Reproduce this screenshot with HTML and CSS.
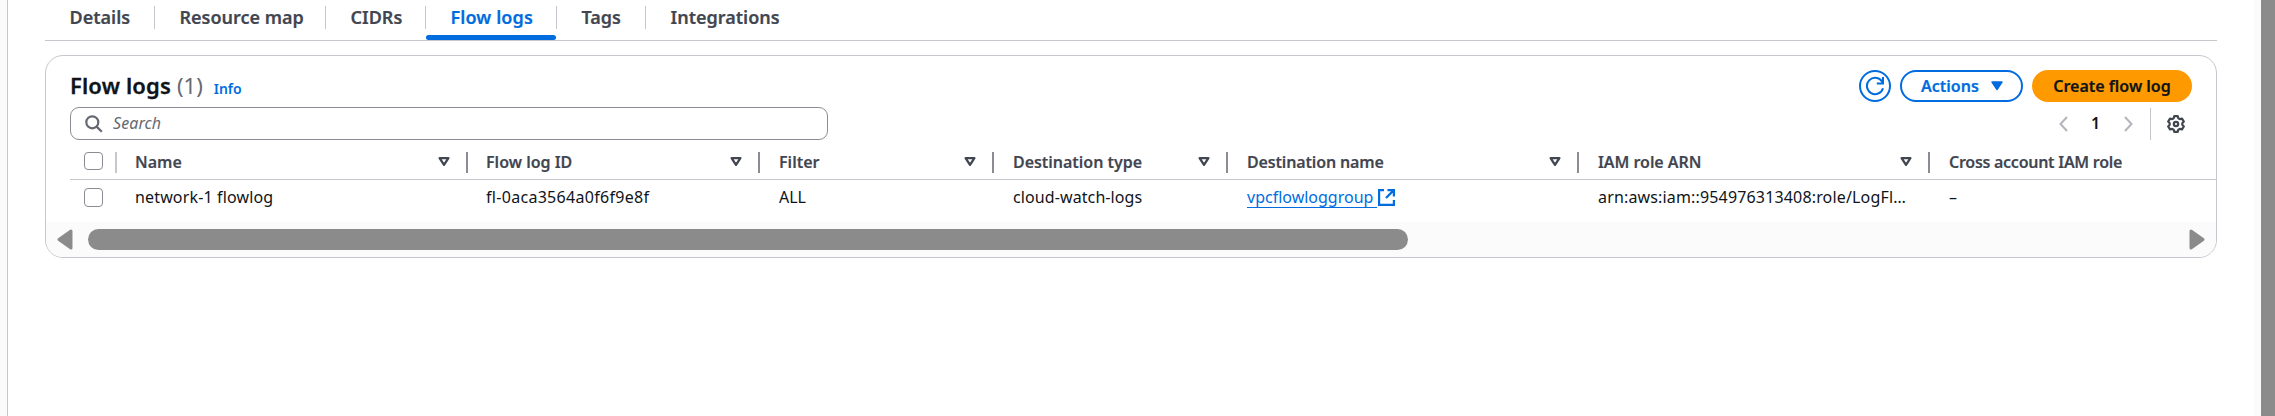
FILE: index.html
```html
<!DOCTYPE html>
<html lang="en">
<head>
<meta charset="utf-8">
<title>Flow logs</title>
<link rel="stylesheet" href="styles.css">
</head>
<body>
<div class="app">
  <div class="edge"></div>
  <main class="main">
    <nav class="tabs">
      <a class="tab t-details"><span>Details</span></a>
      <a class="tab t-map"><span>Resource map</span></a>
      <a class="tab t-cidrs"><span>CIDRs</span></a>
      <a class="tab t-flow active"><span>Flow logs</span></a>
      <a class="tab t-tags"><span>Tags</span></a>
      <a class="tab t-int"><span>Integrations</span></a>
    </nav>
    <section class="card">
      <header class="head">
        <h2 class="title">Flow logs</h2><span class="count">(1)</span><a class="info">Info</a>
        <div class="buttons">
          <button class="btn round" aria-label="Refresh"><svg width="20" height="20" viewBox="0 0 20 20" fill="none" stroke="currentColor" stroke-width="2"><path d="M18 12.200A8.200 8.200 0 1 1 17 5.500L18 7.200"/><path d="M18 1v6.500h-6.200"/></svg></button>
          <button class="btn actions"><span>Actions</span><svg width="12" height="10" viewBox="0 0 12 10"><path d="M1 1h10L6 8.6z" fill="currentColor" stroke="currentColor" stroke-width="1.4" stroke-linejoin="round"/></svg></button>
          <button class="btn primary"><span>Create flow log</span></button>
        </div>
      </header>
      <div class="tools">
        <div class="search"><svg width="18" height="18" viewBox="0 0 18 18" fill="none" stroke="currentColor" stroke-width="2.2"><circle cx="7.3" cy="7.3" r="6"/><path d="M11.6 11.6l5.2 5.2"/></svg><span>Search</span></div>
        <div class="pager">
          <svg class="prev" width="9" height="16" viewBox="0 0 9 16" fill="none" stroke="currentColor" stroke-width="2"><path d="M8 1L1.5 8 8 15"/></svg>
          <span class="page">1</span>
          <svg class="next" width="9" height="16" viewBox="0 0 9 16" fill="none" stroke="currentColor" stroke-width="2"><path d="M1 1l6.5 7L1 15"/></svg>
          <div class="gear"><svg width="18" height="18" viewBox="0 0 18 18" fill="none" stroke="currentColor" stroke-width="2.200" stroke-linejoin="round"><path d="M7.300 1.100h3.400l.6 2.100 1.500.9 2.200-.5 1.800 3-1.500 1.600v1.600l1.500 1.600-1.800 3-2.200-.5-1.500.9-.6 2.100H7.300l-.6-2.100-1.500-.9-2.200.5-1.800-3 1.500-1.600V8.200L1.200 6.600l1.800-3 2.200.5 1.500-.9z"/><circle cx="9" cy="9" r="2.200"/></svg></div>
        </div>
      </div>
      <div class="table">
        <div class="row thead">
          <div class="cell sel"><i class="box"></i></div>
          <div class="cell"><span class="h-name">Name</span><svg class="sort" viewBox="0 0 12 10"><path d="M1.600 1.200h8.800L6 7.900z"/></svg></div>
          <div class="cell"><span class="h-id">Flow log ID</span><svg class="sort" viewBox="0 0 12 10"><path d="M1.600 1.200h8.800L6 7.900z"/></svg></div>
          <div class="cell"><span class="h-filter">Filter</span><svg class="sort" viewBox="0 0 12 10"><path d="M1.600 1.200h8.800L6 7.900z"/></svg></div>
          <div class="cell"><span class="h-type">Destination type</span><svg class="sort" viewBox="0 0 12 10"><path d="M1.600 1.200h8.800L6 7.900z"/></svg></div>
          <div class="cell"><span class="h-dest">Destination name</span><svg class="sort" viewBox="0 0 12 10"><path d="M1.600 1.200h8.800L6 7.900z"/></svg></div>
          <div class="cell"><span class="h-arn">IAM role ARN</span><svg class="sort" viewBox="0 0 12 10"><path d="M1.600 1.200h8.800L6 7.900z"/></svg></div>
          <div class="cell last"><span class="h-cross">Cross account IAM role</span></div>
        </div>
        <div class="row tbody">
          <div class="cell sel"><i class="box"></i></div>
          <div class="cell"><span class="c-name">network-1 flowlog</span></div>
          <div class="cell"><span class="c-id">fl-0aca3564a0f6f9e8f</span></div>
          <div class="cell"><span class="c-filter">ALL</span></div>
          <div class="cell"><span class="c-type">cloud-watch-logs</span></div>
          <div class="cell"><a class="link"><span class="c-dest">vpcflowloggroup</span></a><svg class="ext" width="17" height="17" viewBox="0 0 17 17" fill="none" stroke="currentColor" stroke-width="2.200"><path d="M6 1.100H1.100v14.800h14.800V11"/><path d="M9.500 1.100h6.400v6.400M15.600 1.400L8 9"/></svg></div>
          <div class="cell"><span class="c-arn">arn:aws:iam::954976313408:role/LogFl…</span></div>
          <div class="cell last"><span>–</span></div>
        </div>
      </div>
      <div class="hscroll">
        <svg width="16" height="21" viewBox="0 0 16 21"><path d="M14 2v17L2 10.500z"/></svg>
        <div class="thumb"></div>
        <svg class="right" width="16" height="21" viewBox="0 0 16 21"><path d="M2 2v17l12-8.500z"/></svg>
      </div>
    </section>
  </main>
  <div class="gutter"></div>
  <div class="vscroll"></div>
</div>
</body>
</html>
```
FILE: styles.css
```css
* { box-sizing: border-box; }
body { margin: 0; background: #fff; color: #0f141a; font: 16px/20px "Noto Sans", "Open Sans", sans-serif; overflow: hidden; }
svg { display: block; flex: none; }
span, a, h2 { white-space: nowrap; }
.app { display: flex; height: 416px; }
.edge { width: 8px; background: #fbfbfb; border-right: 1px solid #c6c6cd; }
.main { flex: 1; padding: 0 37px; }
.gutter { width: 7px; background: #fbfbfb; }
.vscroll { width: 14px; background: #8b8b8b; }

.tabs { display: flex; height: 41px; border-bottom: 1px solid #c6c6cd; }
.tab { position: relative; height: 29px; padding: 5px 0 0 24.500px; font-size: 18px; line-height: 24px; font-weight: 600; color: #424650; -webkit-text-stroke: .2px currentColor; }
.tab::after { content: ""; position: absolute; right: 0; top: 6px; width: 1px; height: 23px; background: #c6c6cd; }
.tab:last-child::after { display: none; }
.t-details { width: 110px; }
.t-map { width: 171px; }
.t-cidrs { width: 100px; }
.t-flow { width: 131px; letter-spacing: .1px; }
.t-tags { width: 89px; }
.tab.active { color: #006ce0; }
.tab.active::before { content: ""; position: absolute; left: 0; top: 35px; width: 130px; height: 5px; border-radius: 3px; background: #006ce0; }

.card { margin-top: 14px; height: 203px; border: 1px solid #c6c6cd; border-radius: 18px; overflow: hidden; }
.head { display: flex; align-items: baseline; height: 51px; padding: 13px 24px 0; }
.title { margin: 0; font-size: 22px; line-height: 32px; font-weight: 600; letter-spacing: .15px; -webkit-text-stroke: .3px currentColor; }
.count { margin-left: 6px; font-size: 22px; color: #656871; }
.info { margin-left: 11px; font-size: 14px; font-weight: 600; color: #006ce0; }
.buttons { display: flex; gap: 9px; margin: 1px 0 0 auto; align-self: flex-start; }
.btn { display: flex; align-items: center; height: 32px; padding: 0; border: 2px solid #006ce0; border-radius: 16px; background: #fff; color: #006ce0; font: 600 16px/20px "Noto Sans", sans-serif; }
.btn span { -webkit-text-stroke: .2px currentColor; }
.round { width: 32px; justify-content: center; }
.actions { width: 123px; padding: 0 18px 0 19px; justify-content: space-between; }
.primary { width: 160px; justify-content: center; border-color: #ff9900; background: #ff9900; color: #0f141a; }

.tools { display: flex; justify-content: space-between; height: 34px; padding: 0 24px; }
.search { display: flex; align-items: center; width: 758px; height: 33px; padding-left: 14px; border: 1px solid #8c8c94; border-radius: 9px; color: #656871; }
.search span { margin: -1px 0 0 10px; font-style: italic; letter-spacing: .08px; }
.pager { display: flex; align-items: center; height: 33px; color: #b4b4bb; }
.page { width: 8px; margin: -1px 25px 0 23px; font-weight: 600; color: #0f141a; }
.gear { display: flex; align-items: center; height: 32px; margin-left: 17px; padding: 0 7px 0 16px; border-left: 1px solid #c6c6cd; color: #424650; }

.table { margin-left: 24px; height: 81px; }
.row { display: grid; grid-template-columns: 47px 351px 292px 234px 234px 351px 351px 1fr; }
.thead { height: 39px; border-bottom: 1px solid #c6c6cd; font-weight: 600; color: #424650; }
.cell { position: relative; display: flex; align-items: center; padding-left: 19px; }
.cell:nth-child(2), .cell:nth-child(3) { padding-left: 18px; }
.thead .cell { height: 21px; margin-top: 11px; justify-content: space-between; padding-right: 16px; border-right: 2px solid #8c8c94; }
.thead .cell span { margin-top: -1px; -webkit-text-stroke: .15px currentColor; }
.thead .sel { border-color: #c6c6cd; }
.thead .last { border: 0; }
.row .sel { padding: 0 0 0 14px; }
.box { width: 19px; height: 19px; border: 1px solid #8c8c94; border-radius: 4px; }
.thead .box { height: 18px; align-self: flex-start; }
.sort { width: 12px; height: 10px; margin-top: -1px; fill: none; stroke: currentColor; stroke-width: 2.300; stroke-linejoin: round; }
.h-type { letter-spacing: -.03px; }
.h-dest { letter-spacing: -.15px; }
.h-arn { letter-spacing: -.05px; }
.h-cross { letter-spacing: -.27px; }
.tbody { height: 34px; }
.c-name { letter-spacing: .15px; }
.c-id { letter-spacing: .3px; }
.c-type { letter-spacing: .1px; }
.c-arn { letter-spacing: .16px; }
.link { color: #006ce0; border-bottom: 1px solid #006ce0; padding-right: 4px; line-height: 20px; }
.ext { margin-left: 1px; color: #006ce0; }

.hscroll { display: flex; align-items: center; height: 35px; padding: 0 11px; background: #fbfbfb; }
.hscroll svg { fill: #8b8b8b; stroke: #8b8b8b; stroke-width: 3; stroke-linejoin: round; }
.thumb { width: 1320px; height: 21px; margin-left: 15px; border-radius: 11px; background: #8b8b8b; }
.hscroll .right { margin-left: auto; }
```
